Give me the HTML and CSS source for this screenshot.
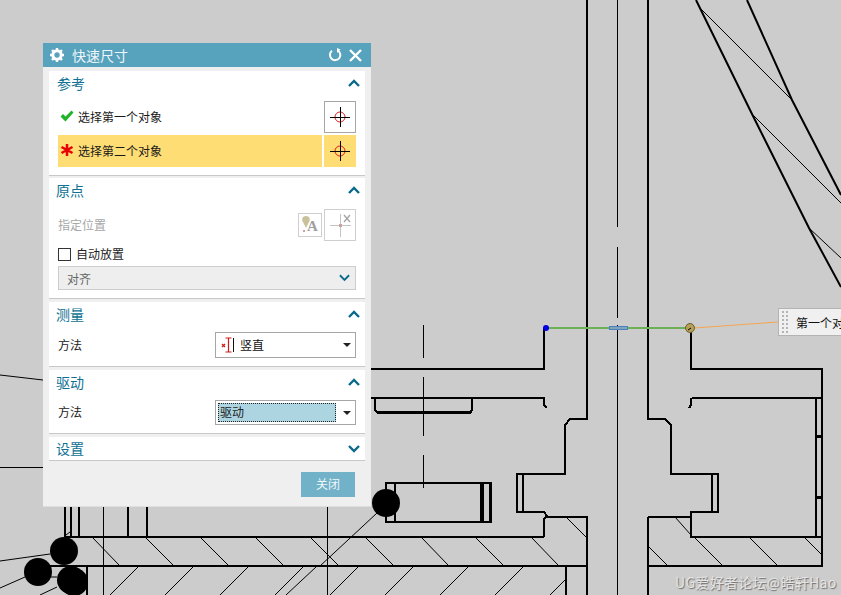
FILE: index.html
```html
<!DOCTYPE html>
<html lang="zh">
<head>
<meta charset="utf-8">
<title>快速尺寸</title>
<link rel="stylesheet" href="styles.css">
</head>
<body>
<div class="stage">
  <svg class="drawing" width="841" height="595" viewBox="0 0 841 595">
    <g class="thick">
      <path d="M587 0V419H570L565 425V474H517V512H544L547 516L544 519V537M65 537H544"/>
      <path d="M648 0V419H665L671 425V474H718V512H691V537H822"/>
      <path d="M547 517H587V595M648 517H691M648 517V595"/>
      <path d="M50 566H587M648 566H822V369H691V328"/>
      <path d="M360 369H544V328M360 398H544V405L547 408"/>
      <path d="M375 398V410L378 413H470L472 410V398M692 398H822M691 398V405L689 408"/>
      <path d="M816 398V537M386 483H491V522H386ZM395 483V522M481 483V522M483 483V522M490 483V522"/>
      <path d="M517 474V512M523 474V512M712 474V512M566 566V595M87 566V595"/>
      <path d="M65 500V537M71 500V537M79 500V537M128 500V537M147 500V537"/>
    </g>
    <g class="thin">
      <path d="M617 0V227M617 247V318M617 325V595M423 325V358M423 377V436M423 455V488"/>
      <path d="M103 500V595M327 500V595M378 411H470M0 467H50"/>
    </g>
    <g class="slant">
      <path d="M696 0L752 114L809 228L841 287M747 0L792 100L841 195"/>
    </g>
    <g class="hatch">
      <path d="M700 8L792 100M752 114L841 203M809 228L841 258"/>
      <path d="M566 517L586 537M675 517L691 535M805 538L822 555"/>
      <path d="M92 537L119 565M146 538L173 565M201 538L228 565M256 538L283 565M311 538L338 565M366 538L393 565M422 538L448 565M476 538L503 565M532 538L558 565"/>
      <path d="M649 547L667 565M695 538L722 565M750 538L777 565"/>
      <path d="M138 567L110 595M193 567L165 595M248 567L220 595M303 567L275 595M316 567L286 595M358 567L330 595M413 567L385 595M468 567L440 595M523 567L495 595M565 580L550 595"/>
      <path d="M377 513L320 566M66 535L70 532M50 577H57M40 595L57 587"/>
      <path d="M0 375L43 380M0 561L50 554M0 588L25 577"/>
    </g>
    <g class="blobs">
      <circle cx="386" cy="503" r="14"/>
      <circle cx="64" cy="551" r="14"/>
      <circle cx="38" cy="572" r="14"/>
      <circle cx="71" cy="580" r="14"/>
      <circle cx="74" cy="582" r="14"/>
      <rect x="815" y="435" width="7" height="3"/>
      <rect x="815" y="496" width="7" height="3"/>
    </g>
    <path class="orange" d="M694 328L778 322"/>
    <path class="green" d="M546 328H690"/>
    <rect class="mark" x="609.500" y="326.500" width="18" height="3"/>
    <circle class="dot-blue" cx="546" cy="328" r="3"/>
    <circle class="dot-olive" cx="690" cy="328" r="4.500"/>
    <path class="dot-tick" d="M688 330L691 328"/>
  </svg>

  <div class="tip">
    <span class="grip"></span>
    <span class="tip-text">第一个对象</span>
  </div>

  <div class="wm">UG爱好者论坛@皓轩Hao</div>

  <div class="dialog">
    <div class="titlebar">
      <svg class="t-gear" width="16" height="16" viewBox="0 0 16 16">
        <circle class="gear-ring" cx="8" cy="8" r="4.200"/>
        <path class="gear-teeth" d="M8 1V3.500M8 12.500V15M1 8H3.500M12.500 8H15M3 3L4.800 4.800M11.200 11.200L13 13M13 3L11.200 4.800M4.800 11.200L3 13"/>
      </svg>
      <span class="t-name">快速尺寸</span>
      <svg class="t-reset" width="14" height="14" viewBox="0 0 14 14">
        <path d="M4 2.800A5.200 5.200 0 1 0 9.500 2.300"/>
        <path class="t-arrow" d="M9 0V5L12.500 1.500Z"/>
      </svg>
      <svg class="t-close" width="13" height="13" viewBox="0 0 13 13">
        <path d="M1 1L12 12M12 1L1 12"/>
      </svg>
    </div>

    <div class="sections">
      <section class="sec sec-ref">
        <header class="sec-h"><span>参考</span>
          <svg class="chev" width="12" height="8" viewBox="0 0 12 8"><path d="M1 7L6 2L11 7"/></svg>
        </header>
        <div class="pick-row">
          <div class="pick-label">
            <svg class="state" width="14" height="12" viewBox="0 0 14 12"><path class="ok" d="M0.500 6.500L3 4L5.500 6.500L11.500 0.500L13.500 2.500L5.500 11.500Z"/></svg>
            <span>选择第一个对象</span>
          </div>
          <div class="tgt tgt-active">
            <svg width="20" height="20" viewBox="0 0 20 20"><circle class="tgt-c" cx="10" cy="10" r="5"/><path class="tgt-x" d="M10.500 0V20M0 10.500H20"/></svg>
          </div>
        </div>
        <div class="pick-row">
          <div class="pick-label pick-on">
            <svg class="state" width="14" height="12" viewBox="0 0 14 12"><path class="req" d="M7 0V12M1.500 3L12.500 9M12.500 3L1.500 9"/></svg>
            <span>选择第二个对象</span>
          </div>
          <div class="tgt tgt-on">
            <svg width="20" height="20" viewBox="0 0 20 20"><circle class="tgt-c" cx="10" cy="10" r="5"/><path class="tgt-x" d="M10.500 0V20M0 10.500H20"/></svg>
          </div>
        </div>
      </section>

      <section class="sec sec-origin">
        <header class="sec-h sec-h-31"><span>原点</span>
          <svg class="chev" width="12" height="8" viewBox="0 0 12 8"><path d="M1 7L6 2L11 7"/></svg>
        </header>
        <div class="pos-row">
          <span class="muted">指定位置</span>
          <div class="pos-tools">
            <div class="tool-a">
              <svg width="22" height="22" viewBox="0 0 22 22">
                <path class="pin" d="M7 2C3 2 2.500 6 4 8L7 14L10 8C11.500 6 11 2 7 2Z"/>
                <text class="tool-letter" x="8" y="17">A</text>
                <rect class="pin-dot" x="4" y="16" width="2" height="2"/>
              </svg>
            </div>
            <div class="tool-b">
              <svg width="30" height="30" viewBox="0 0 30 30">
                <path class="axis" d="M4.500 15.500H26M15.500 4V27"/>
                <rect class="pin-dot" x="14" y="14" width="3" height="3"/>
                <path class="axis-x" d="M19 5L25 12M25 5L19 12"/>
              </svg>
            </div>
          </div>
        </div>
        <label class="check-row"><span class="box"></span><span class="check-text">自动放置</span></label>
        <div class="sel-off"><span>对齐</span>
          <svg class="chev" width="11" height="8" viewBox="0 0 12 8"><path d="M1 1L6 6L11 1"/></svg>
        </div>
      </section>

      <section class="sec sec-measure">
        <header class="sec-h"><span>测量</span>
          <svg class="chev" width="12" height="8" viewBox="0 0 12 8"><path d="M1 7L6 2L11 7"/></svg>
        </header>
        <div class="field field-26">
          <span class="f-label">方法</span>
          <div class="combo">
            <svg class="vert" width="14" height="16" viewBox="0 0 14 16">
              <path class="vert-r" d="M4.500 1H10.500M7.500 1V15M4.500 15H10.500M1 7L4 10M4 7L1 10"/>
              <path class="vert-k" d="M12.500 1V15"/>
            </svg>
            <span class="combo-text">竖直</span>
            <i class="caret"></i>
          </div>
        </div>
      </section>

      <section class="sec sec-drive">
        <header class="sec-h"><span>驱动</span>
          <svg class="chev" width="12" height="8" viewBox="0 0 12 8"><path d="M1 7L6 2L11 7"/></svg>
        </header>
        <div class="field field-25">
          <span class="f-label">方法</span>
          <div class="combo combo-focus">
            <span class="focus-text">驱动</span>
            <i class="caret"></i>
          </div>
        </div>
      </section>

      <section class="sec sec-set">
        <header class="sec-h sec-h-23"><span>设置</span>
          <svg class="chev" width="12" height="8" viewBox="0 0 12 8"><path d="M1 1L6 6L11 1"/></svg>
        </header>
      </section>
    </div>

    <div class="foot"><button class="close-btn" type="button">关闭</button></div>
  </div>
</div>
</body>
</html>
```

FILE: styles.css
```css
html, body {
  margin: 0;
  padding: 0;
  height: 100%;
  overflow: hidden;
}

body {
  background: #cccccc;
  font-family: "Noto Sans CJK SC", "Noto Sans", sans-serif;
  font-size: 12px;
  color: #222;
}

.stage {
  position: relative;
  width: 841px;
  height: 595px;
  overflow: hidden;
}

/* CAD canvas */
.drawing {
  position: absolute;
  left: 0;
  top: 0;
}

.thick path {
  fill: none;
  stroke: #000;
  stroke-width: 2;
  shape-rendering: crispEdges;
}

.thin path {
  fill: none;
  stroke: #000;
  stroke-width: 1;
  shape-rendering: crispEdges;
}

.slant path {
  fill: none;
  stroke: #000;
  stroke-width: 2;
}

.hatch path {
  fill: none;
  stroke: #000;
  stroke-width: 1;
}

.blobs { fill: #000; }

.orange {
  fill: none;
  stroke: #f5a550;
  stroke-width: 1;
}

.green {
  fill: none;
  stroke: #6cb155;
  stroke-width: 2;
  shape-rendering: crispEdges;
}

.mark {
  fill: #7fa6b8;
  stroke: #4a7fc0;
  stroke-width: 1;
  shape-rendering: crispEdges;
}

.dot-blue { fill: #0000e0; }

.dot-olive {
  fill: #b5a055;
  stroke: #6c6030;
  stroke-width: 1;
}

.dot-tick {
  fill: none;
  stroke: #000;
  stroke-width: 1;
}

/* tooltip */
.tip {
  position: absolute;
  left: 778px;
  top: 308px;
  width: 100px;
  height: 28px;
  box-sizing: border-box;
  display: flex;
  align-items: center;
  background: #f0f0f0;
  border: 1px solid #b4b4b4;
}

.grip {
  width: 8px;
  height: 24px;
  margin-left: 2px;
  background-image: radial-gradient(circle, #b4b4b4 1.300px, transparent 1.400px);
  background-size: 4px 4px;
}

.tip-text {
  margin-left: 7px;
  white-space: nowrap;
  color: #111;
}

/* watermark */
.wm {
  position: absolute;
  left: 675px;
  top: 572px;
  font-size: 14px;
  line-height: 20px;
  letter-spacing: 0.300px;
  white-space: nowrap;
  color: #e4e4e4;
  text-shadow: 1px 1px 1px #6e6e6e;
}

/* dialog */
.dialog {
  position: absolute;
  left: 43px;
  top: 43px;
  width: 328px;
  height: 464px;
  box-sizing: border-box;
  display: flex;
  flex-direction: column;
  background: #efefef;
  border-bottom: 1px solid #dedede;
}

.titlebar {
  height: 24px;
  display: flex;
  align-items: center;
  background: #57a2bd;
  color: #fff;
  flex: none;
}

.t-gear { margin-left: 6px; }

.gear-ring {
  fill: none;
  stroke: #fff;
  stroke-width: 3;
}

.gear-teeth {
  fill: none;
  stroke: #fff;
  stroke-width: 2.400;
}

.t-name {
  margin-left: 7px;
  font-size: 14px;
  flex: 1;
  color: #eef6f9;
}

.t-reset {
  margin-right: 7px;
  fill: none;
  stroke: #fff;
  stroke-width: 2;
}

.t-arrow {
  fill: #fff;
  stroke: none;
}

.t-close {
  margin-right: 9px;
  fill: none;
  stroke: #fff;
  stroke-width: 2.400;
}

.sections {
  display: flex;
  flex-direction: column;
  gap: 3px;
  padding: 4px 6px 0 6px;
}

.sec {
  background: #fff;
  border-bottom: 1px solid #c8c8c8;
  box-sizing: border-box;
  padding: 0 9px 8px 9px;
}

.sec-ref { margin-bottom: -1px; }
.sec-set { padding-bottom: 0; }

.sec-h {
  height: 30px;
  box-sizing: border-box;
  padding-bottom: 6px;
  display: flex;
  align-items: center;
  justify-content: space-between;
  margin: 0 0 0 -2px;
  font-size: 14px;
  color: #0f7193;
}

.sec-h-31 { height: 31px; padding-bottom: 7px; }
.sec-h-23 { height: 23px; padding-bottom: 2px; }
.sec-h-23 .chev { margin-top: 3px; }

.sec-ref .sec-h { margin-left: -1px; }

.chev {
  margin-right: -4px;
  fill: none;
  stroke: #0a6a8c;
  stroke-width: 2.400;
}

.pick-row {
  display: flex;
  gap: 2px;
  height: 32px;
}

.pick-row + .pick-row { margin-top: 2px; }

.pick-label {
  width: 264px;
  display: flex;
  align-items: center;
  gap: 4px;
  padding: 0 0 2px 2px;
  box-sizing: border-box;
  color: #1a1a1a;
}

.pick-on { background: #fedd75; }

.state { flex: none; }

.ok { fill: #22b32a; }

.req { fill: none; stroke: #e80000; stroke-width: 2.500; }

.tgt {
  width: 32px;
  height: 32px;
  box-sizing: border-box;
  display: flex;
  align-items: center;
  justify-content: center;
}

.tgt-active { border: 1px solid #a6a6a6; }
.tgt-on { background: #fedd75; }

.tgt-c { fill: none; stroke: #e31c1c; stroke-width: 1; }
.tgt-x { fill: none; stroke: #000; stroke-width: 1; shape-rendering: crispEdges; }

.pos-row {
  display: flex;
  align-items: center;
  justify-content: space-between;
  height: 32px;
}

.muted {
  color: #a8a8a8;
  margin-bottom: 2px;
}

.pos-tools {
  display: flex;
  align-items: center;
  gap: 2px;
}

.tool-a, .tool-b {
  box-sizing: border-box;
  display: flex;
  align-items: center;
  justify-content: center;
  border: 1px solid #cfcfcf;
}

.tool-a { width: 24px; height: 24px; }
.tool-b { width: 32px; height: 32px; }

.pin { fill: #c9c19a; }
.pin-dot { fill: #c9a4a0; }

.tool-letter {
  font-family: "Liberation Serif", serif;
  font-size: 15px;
  font-weight: 700;
  fill: #a0a0a0;
}

.axis { fill: none; stroke: #c4c4c4; stroke-width: 1; shape-rendering: crispEdges; }
.axis-x { fill: none; stroke: #a4a4a4; stroke-width: 1.300; }

.check-row {
  display: flex;
  align-items: center;
  gap: 5px;
  height: 14px;
  margin-top: 6px;
  color: #222;
}

.check-text { margin-bottom: 2px; }

.box {
  width: 13px;
  height: 13px;
  box-sizing: border-box;
  border: 1px solid #333;
  background: #fff;
}

.sel-off {
  height: 24px;
  margin-top: 5px;
  box-sizing: border-box;
  display: flex;
  align-items: center;
  justify-content: space-between;
  padding: 0 5px 0 8px;
  background: #eeeeee;
  border: 1px solid #cdcdcd;
  color: #666;
}

.sel-off .chev {
  margin-right: 0;
  stroke-width: 2;
}

.field {
  display: flex;
  align-items: center;
  justify-content: space-between;
}

.field-26 { height: 26px; }
.field-25 { height: 25px; }

.f-label {
  color: #222;
  margin-bottom: 2px;
}

.combo {
  width: 141px;
  height: 100%;
  box-sizing: border-box;
  display: flex;
  align-items: center;
  border: 1px solid #a6a6a6;
  background: #fff;
  position: relative;
}

.vert { margin-left: 5px; flex: none; }
.vert-r { fill: none; stroke: #d01818; stroke-width: 1.200; }
.vert-k { fill: none; stroke: #111; stroke-width: 1; }

.combo-text {
  margin: 0 0 2px 5px;
  color: #111;
}

.caret {
  position: absolute;
  right: 4px;
  top: 50%;
  margin-top: -2px;
  width: 0;
  height: 0;
  border-left: 4px solid transparent;
  border-right: 4px solid transparent;
  border-top: 4px solid #222;
}

.combo-focus { padding-left: 2px; }

.focus-text {
  width: 118px;
  height: 19px;
  line-height: 15px;
  box-sizing: border-box;
  padding-left: 1px;
  background: #add5e1;
  border: 1px dotted #222;
  color: #222;
}

.foot {
  display: flex;
  justify-content: flex-end;
  padding: 11px 16px 0 0;
}

.close-btn {
  width: 54px;
  height: 25px;
  padding: 0 0 2px;
  border: 0;
  background: #72b2c8;
  color: #eef7fa;
  font-family: inherit;
  font-size: 12px;
}
```
